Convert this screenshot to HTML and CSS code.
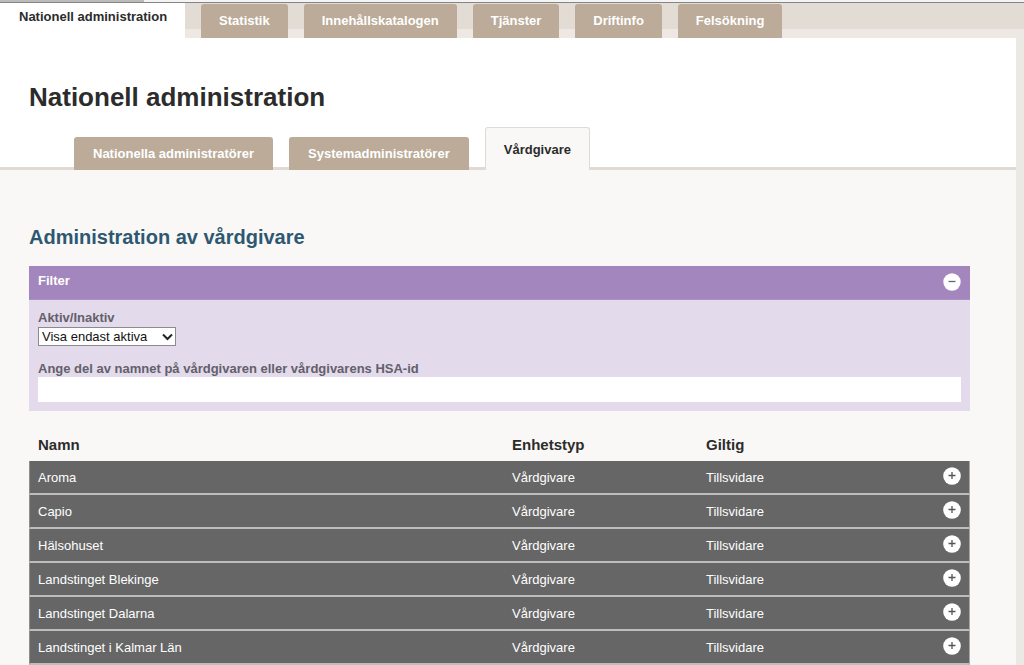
FILE: index.html
```html
<!DOCTYPE html>
<html lang="sv">
<head>
<meta charset="utf-8">
<meta name="viewport" content="width=device-width, initial-scale=1">
<title>Nationell administration</title>
<link rel="stylesheet" href="styles.css">
</head>
<body>
<svg class="sprite" aria-hidden="true">
  <symbol id="minus" viewBox="0 0 18 18"><circle cx="9" cy="9" r="8.7" fill="#fff"/><path d="M5.5 8.5h7" stroke="#666" stroke-width="1.3"/></symbol>
  <symbol id="plus" viewBox="0 0 18 18"><circle cx="9" cy="9" r="8.8" fill="#fff"/><path d="M5.5 8.5h7M9 5v7" stroke="#555" stroke-width="1.3"/></symbol>
</svg>
<header class="top">
  <div class="progress"></div>
  <nav class="tabs">
    <a class="tab tab-active" href="#">Nationell administration</a>
    <a class="tab" href="#">Statistik</a>
    <a class="tab" href="#">Innehållskatalogen</a>
    <a class="tab" href="#">Tjänster</a>
    <a class="tab" href="#">Driftinfo</a>
    <a class="tab" href="#">Felsökning</a>
  </nav>
</header>
<main class="page">
  <div class="intro">
    <h1>Nationell administration</h1>
    <nav class="subtabs">
      <a class="subtab" href="#">Nationella administratörer</a>
      <a class="subtab" href="#">Systemadministratörer</a>
      <a class="subtab subtab-active" href="#">Vårdgivare</a>
    </nav>
  </div>
  <section class="content">
    <h2>Administration av vårdgivare</h2>
    <form class="filter">
      <div class="filter-head">
        <span>Filter</span>
        <button class="icon-button" type="button" aria-label="Dölj filter"><svg><use href="#minus"/></svg></button>
      </div>
      <div class="filter-body">
        <label for="status">Aktiv/Inaktiv</label>
        <div class="select-wrap">
          <select id="status"><option>Visa endast aktiva</option></select>
          <svg class="chevron" viewBox="0 0 11 8" aria-hidden="true"><path d="M1 1.5l4.5 4.5L10 1.5" fill="none" stroke="#222" stroke-width="2"/></svg>
        </div>
        <label for="query">Ange del av namnet på vårdgivaren eller vårdgivarens HSA-id</label>
        <input id="query" type="text">
      </div>
    </form>
    <table class="list">
      <thead>
        <tr><th class="name">Namn</th><th class="type">Enhetstyp</th><th class="valid">Giltig</th><th class="action"></th></tr>
      </thead>
      <tbody>
        <tr><td>Aroma</td><td>Vårdgivare</td><td>Tillsvidare</td><td class="action"><button class="icon-button" type="button" aria-label="Visa Aroma"><svg><use href="#plus"/></svg></button></td></tr>
        <tr><td>Capio</td><td>Vårdgivare</td><td>Tillsvidare</td><td class="action"><button class="icon-button" type="button" aria-label="Visa Capio"><svg><use href="#plus"/></svg></button></td></tr>
        <tr><td>Hälsohuset</td><td>Vårdgivare</td><td>Tillsvidare</td><td class="action"><button class="icon-button" type="button" aria-label="Visa Hälsohuset"><svg><use href="#plus"/></svg></button></td></tr>
        <tr><td>Landstinget Blekinge</td><td>Vårdgivare</td><td>Tillsvidare</td><td class="action"><button class="icon-button" type="button" aria-label="Visa Landstinget Blekinge"><svg><use href="#plus"/></svg></button></td></tr>
        <tr><td>Landstinget Dalarna</td><td>Vårdgivare</td><td>Tillsvidare</td><td class="action"><button class="icon-button" type="button" aria-label="Visa Landstinget Dalarna"><svg><use href="#plus"/></svg></button></td></tr>
        <tr><td>Landstinget i Kalmar Län</td><td>Vårdgivare</td><td>Tillsvidare</td><td class="action"><button class="icon-button" type="button" aria-label="Visa Landstinget i Kalmar Län"><svg><use href="#plus"/></svg></button></td></tr>
      </tbody>
    </table>
  </section>
</main>
</body>
</html>
```
FILE: styles.css
```css
* { box-sizing: border-box; }

body {
  margin: 0;
  background: #ebe9e3;
  color: #2c2c2c;
  font: 13px/16px "Liberation Sans", Arial, sans-serif;
}

a { color: inherit; text-decoration: none; }

.sprite { position: absolute; width: 0; height: 0; }

/* Top navigation */
.top { background: linear-gradient(#e3dcd5 29px, #ede8e3 29px); }

.progress {
  height: 3px;
  border-bottom: 1px solid #858585;
  background: linear-gradient(to right, #bbb 144px, #f4f4f4 144px);
}

.tabs {
  display: flex;
  align-items: flex-end;
  gap: 16px;
}

.tab {
  height: 34px;
  padding: 9px 18px;
  border-radius: 3px 3px 0 0;
  background: #bbab98;
  color: #fff;
  font-weight: bold;
}

.tab-active {
  height: 35px;
  padding: 6px 18px 13px 19px;
  border-radius: 0;
  background: #fff;
  color: #2c2c2c;
}

/* Page */
.page { margin-right: 8px; background: #f9f8f6; }

.intro { background: #fff; border-bottom: 3px solid #dfdad4; }

h1 {
  margin: 0;
  padding: 43px 29px 14px;
  font-size: 26px;
  line-height: 32px;
}

.subtabs {
  display: flex;
  align-items: flex-end;
  gap: 16px;
  margin-bottom: -3px;
  padding-left: 74px;
}

.subtab {
  padding: 9px 19px 8px;
  border-radius: 3px 3px 0 0;
  background: #bbab98;
  color: #fff;
  font-weight: bold;
}

.subtab-active {
  padding: 14px 18px 12px;
  border: 1px solid #dfdad4;
  border-bottom: 0;
  background: #f9f8f6;
  color: #2c2c2c;
}

.content { padding: 53px 46px 1px 29px; }

h2 {
  margin: 0 0 15px;
  color: #2e5871;
  font-size: 20px;
  line-height: 28px;
}

/* Filter */
.filter-head {
  display: flex;
  justify-content: space-between;
  padding: 7px 9px 8px;
  border-bottom: 1px solid #ab90c3;
  background: #a386bd;
  color: #fff;
  font-weight: bold;
}

.icon-button {
  display: block;
  width: 18px;
  height: 18px;
  padding: 0;
  border: 0;
  background: none;
}

.icon-button svg { display: block; width: 18px; height: 18px; }

.filter-body {
  padding: 10px 9px 9px;
  background: #e3daeb;
  color: #62606a;
}

.filter-body label { display: block; font-weight: bold; }

.select-wrap { position: relative; width: 138px; margin: 1px 0 15px; }

select {
  display: block;
  width: 100%;
  height: 19px;
  padding: 0 3px;
  border: 1px solid #8b8b8b;
  border-radius: 0;
  appearance: none;
  background: #fff;
  color: #111;
  font: inherit;
}

.chevron { position: absolute; top: 6px; right: 3px; width: 11px; height: 8px; pointer-events: none; }

.filter-body input {
  display: block;
  width: 100%;
  height: 25px;
  padding: 0 6px;
  border: 0;
  background: #fff;
  font: inherit;
}

/* List */
.list {
  width: 100%;
  margin-top: 18px;
  border-collapse: separate;
  border-spacing: 0;
  table-layout: fixed;
}

.list th {
  padding: 6px 9px;
  font-size: 15px;
  line-height: 20px;
  text-align: left;
}

.list .name { width: 474px; }
.list .type { width: 194px; }
.list .action { width: 40px; }

.list td {
  height: 34px;
  padding: 2px 9px 0;
  border-bottom: 2px solid #bdbdbd;
  background: #666;
  color: #fff;
}

.list td:first-child { padding-left: 8px; border-left: 1px solid #8f8f8f; }
.list td:last-child { border-right: 1px solid #a8a8a8; }

.list td.action { padding: 0 8px 2px 0; }
.list td .icon-button { margin-left: auto; }
```
